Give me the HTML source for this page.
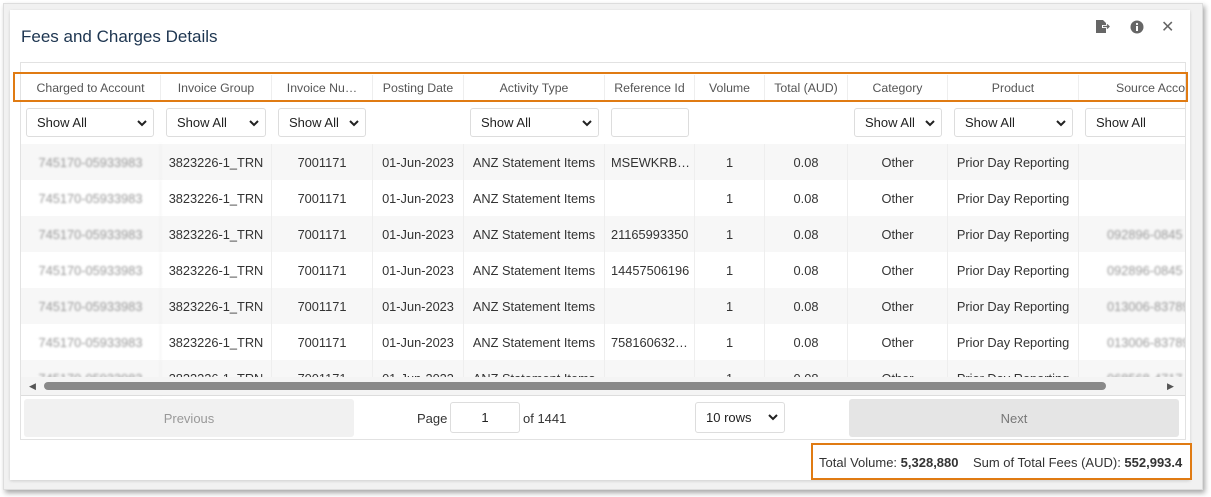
<!DOCTYPE html><html><head><style>
*{box-sizing:border-box;margin:0;padding:0}
body{width:1211px;height:497px;background:#fff;font-family:"Liberation Sans",sans-serif;color:#333;position:relative;overflow:hidden;font-size:12.8px}
.frame{position:absolute;left:3px;top:3px;width:1200px;height:487px;background:#f1f1f1;border:1px solid #ddd;box-shadow:2px 3px 5px rgba(0,0,0,.35)}
.card{position:absolute;left:10px;top:10px;width:1180px;height:470px;background:#fff;box-shadow:0 1px 3px rgba(0,0,0,.15)}
.title{position:absolute;left:21px;top:27px;font-size:17px;color:#1d3550}
.tbl{position:absolute;left:20px;top:62px;width:1166px;height:378px;border:1px solid #e2e2e2;background:#fff;overflow:hidden}
.grid{position:absolute;left:0;top:1px;width:1200px}
.row{position:absolute;left:0;height:36px;width:1200px}
.c{position:absolute;top:0;height:100%;display:flex;align-items:center;justify-content:center;border-right:1px solid #eee;white-space:nowrap;overflow:hidden}
.hdr .c{font-size:12.3px;color:#555}
.sel{position:absolute;top:5px;height:29px;border:1px solid #ddd;border-radius:3px;background:#fff;font-size:13px;display:flex;align-items:center;padding-left:10px;color:#222}
.sel svg{position:absolute;right:6px;top:11px}
.blur{color:#999;filter:blur(1.1px)}
.sb{position:absolute;left:0;top:314px;width:1166px;height:18px;background:#f4f4f4}
.thumb{position:absolute;left:23px;top:5px;width:1062px;height:8px;background:#898989;border-radius:4px}
.btn{position:absolute;top:336px;height:38px;border-radius:3px;display:flex;align-items:center;justify-content:center;color:#999;font-size:13px}
.box{position:absolute;border:2px solid #e07b13}
</style></head><body>
<div class="frame"></div>
<div class="card"></div>
<div class="title">Fees and Charges Details</div>
<svg style="position:absolute;left:1095px;top:20px" width="16" height="14"><path d="M1 0h7l3 3v2H7v3h4v5H1z" fill="#666"/><path d="M8 6.5h6M12 4.5l2 2-2 2" stroke="#666" fill="none" stroke-width="1.3"/></svg>
<svg style="position:absolute;left:1130px;top:20px" width="14" height="14"><circle cx="7" cy="7" r="6.5" fill="#666"/><rect x="6" y="6" width="2" height="5" fill="#fff"/><circle cx="7" cy="4" r="1.1" fill="#fff"/></svg>
<div style="position:absolute;left:1161px;top:17px;font-size:16px;color:#666">✕</div>
<div class="tbl">
<div class="grid">
<div class="row hdr" style="top:11px;height:26px">
<div class="c" style="left:0;width:140px">Charged to Account</div><div class="c" style="left:140px;width:111px">Invoice Group</div><div class="c" style="left:251px;width:101px">Invoice Nu…</div><div class="c" style="left:352px;width:91px">Posting Date</div><div class="c" style="left:443px;width:141px">Activity Type</div><div class="c" style="left:584px;width:90px">Reference Id</div><div class="c" style="left:674px;width:70px">Volume</div><div class="c" style="left:744px;width:83px">Total (AUD)</div><div class="c" style="left:827px;width:100px">Category</div><div class="c" style="left:927px;width:131px">Product</div><div class="c" style="left:1058px;width:142px;justify-content:flex-start;padding-left:37px">Source Account</div>
</div>
<div class="row" style="top:39px;height:42px">
<div class="sel" style="left:5px;width:128px">Show All<svg width="10" height="7"><path d="M1 1l4 4 4-4" stroke="#222" stroke-width="2" fill="none"/></svg></div>
<div class="sel" style="left:145px;width:100px">Show All<svg width="10" height="7"><path d="M1 1l4 4 4-4" stroke="#222" stroke-width="2" fill="none"/></svg></div>
<div class="sel" style="left:257px;width:88px">Show All<svg width="10" height="7"><path d="M1 1l4 4 4-4" stroke="#222" stroke-width="2" fill="none"/></svg></div>
<div class="sel" style="left:449px;width:129px">Show All<svg width="10" height="7"><path d="M1 1l4 4 4-4" stroke="#222" stroke-width="2" fill="none"/></svg></div>
<div class="sel" style="left:590px;width:78px"></div>
<div class="sel" style="left:833px;width:88px">Show All<svg width="10" height="7"><path d="M1 1l4 4 4-4" stroke="#222" stroke-width="2" fill="none"/></svg></div>
<div class="sel" style="left:933px;width:119px">Show All<svg width="10" height="7"><path d="M1 1l4 4 4-4" stroke="#222" stroke-width="2" fill="none"/></svg></div>
<div class="sel" style="left:1064px;width:120px">Show All</div>
</div>
</div>
<div id="rows"></div>
<div class="sb"><div style="position:absolute;left:8px;top:4px;font-size:9px;color:#555">◀</div><div class="thumb"></div><div style="position:absolute;left:1146px;top:4px;font-size:9px;color:#555">▶</div></div>
<div style="position:absolute;left:0;top:332px;width:1166px;height:1px;background:#ddd"></div>
<div class="btn" style="left:3px;width:330px;background:#f1f1f1">Previous</div>
<div style="position:absolute;left:396px;top:348px;font-size:13px">Page</div>
<div class="sel" style="left:429px;top:339px;width:70px;height:31px;justify-content:center;padding:0">1</div>
<div style="position:absolute;left:502px;top:348px;font-size:13px">of 1441</div>
<div class="sel" style="left:674px;top:339px;width:90px;height:31px">10 rows<svg width="10" height="7"><path d="M1 1l4 4 4-4" stroke="#222" stroke-width="2" fill="none"/></svg></div>
<div class="btn" style="left:828px;width:330px;background:#e5e5e5;color:#777">Next</div>
</div>
<div class="box" style="left:13px;top:72px;width:1175px;height:30px"></div>
<div class="box" style="left:811px;top:443px;width:381px;height:37px"></div>
<div style="position:absolute;left:819px;top:455px;font-size:13px">Total Volume: <b>5,328,880</b>&nbsp;&nbsp;&nbsp;&nbsp;Sum of Total Fees (AUD): <b>552,993.4</b></div>
<script>
var refs=["MSEWKRB…","","21165993350","14457506196","","758160632…",""];
var src=["","","092896-0845","092896-0845","013006-83789","013006-83789","068568-4717"];
var h="";
for(var i=0;i<7;i++){
var t=81+i*36;
h+='<div class="row" style="top:'+t+'px;background:'+(i%2==0?'#f7f7f7':'#fff')+'">'+
'<div class="c blur" style="left:0;width:140px">745170-05933983</div><div class="c" style="left:140px;width:111px">3823226-1_TRN</div><div class="c" style="left:251px;width:101px">7001171</div><div class="c" style="left:352px;width:91px">01-Jun-2023</div><div class="c" style="left:443px;width:141px">ANZ Statement Items</div><div class="c" style="left:584px;width:90px;justify-content:flex-start;padding-left:6px">'+refs[i]+'</div><div class="c" style="left:674px;width:70px">1</div><div class="c" style="left:744px;width:83px">0.08</div><div class="c" style="left:827px;width:100px">Other</div><div class="c" style="left:927px;width:131px">Prior Day Reporting</div><div class="c blur" style="left:1058px;width:142px;justify-content:flex-start;padding-left:28px">'+src[i]+'</div></div>';
}
document.getElementById("rows").outerHTML=h;
</script>
</body></html>
